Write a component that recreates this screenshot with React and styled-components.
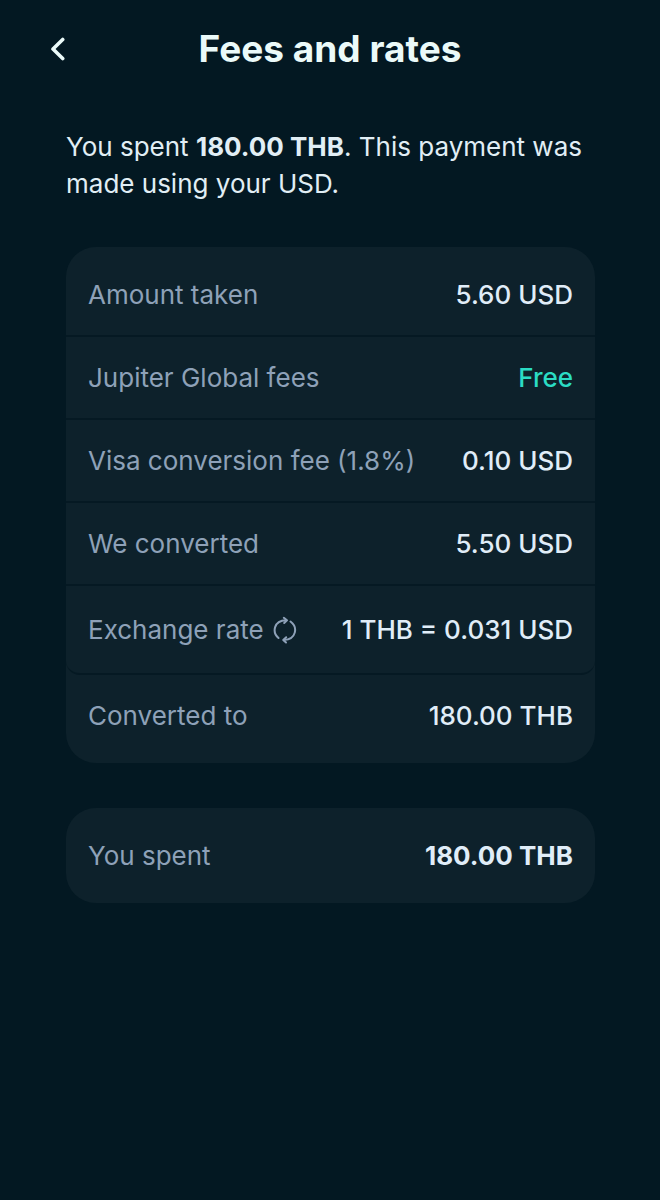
import React from "react";
import styled, { createGlobalStyle } from "styled-components";

const fees = [
  { label: "Amount taken", value: "5.60 USD" },
  { label: "Jupiter Global fees", value: "Free", free: true },
  { label: "Visa conversion fee (1.8%)", value: "0.10 USD" },
  { label: "We converted", value: "5.50 USD" },
  { label: "Exchange rate", value: "1 THB = 0.031 USD", rate: true },
  { label: "Converted to", value: "180.00 THB" },
];

const RefreshIcon = () => (
  <svg
    width="24"
    height="28"
    viewBox="0 0 24 28"
    fill="none"
    stroke="currentColor"
    strokeWidth="2"
    strokeLinecap="round"
    strokeLinejoin="round"
    aria-hidden="true"
  >
    <path d="M5.5 22C-1 16.500 0.500 4.500 13 4.200" />
    <path d="M10.800 1.800L14 4.300L11.200 7" />
    <path d="M17.500 5.500C25 11 23.500 23.500 11 24" />
    <path d="M13.200 21.200L10.200 23.900L13 26.500" />
  </svg>
);

const App = () => {
  return (
    <Page>
      <GlobalStyle />
      <Header>
        <BackButton type="button" aria-label="Back">
          <svg width="16" height="24" viewBox="0 0 16 24" fill="none" aria-hidden="true">
            <path
              d="M12.700 2.500L3 12L12.700 21.500"
              stroke="currentColor"
              strokeWidth="3.600"
              strokeLinecap="round"
              strokeLinejoin="round"
            />
          </svg>
        </BackButton>
        <Title>Fees and rates</Title>
      </Header>
      <Main>
        <Summary>
          You spent <strong>180.00 THB</strong>. This payment was made using your USD.
        </Summary>
        <Card>
          {fees.map(({ label, value, free, rate }) => (
            <Row key={label} $rate={rate}>
              <Label>
                {label}
                {rate && <RefreshIcon />}
              </Label>
              <Value $free={free}>{value}</Value>
            </Row>
          ))}
        </Card>
        <Card>
          <Row>
            <Label>You spent</Label>
            <Value $total>180.00 THB</Value>
          </Row>
        </Card>
      </Main>
    </Page>
  );
};

const GlobalStyle = createGlobalStyle`
  body {
    margin: 0;
    background-color: #031822;
    font-family: Inter, "Liberation Sans", sans-serif;
    font-optical-sizing: none;
  }
`;

const Page = styled.div`
  min-height: 100vh;
  background-color: #031822;
`;

const Header = styled.header`
  display: grid;
  grid-template-columns: 48px 1fr 48px;
  align-items: center;
  padding: 25px 34px;
`;

const BackButton = styled.button`
  display: flex;
  align-items: center;
  justify-content: center;
  height: 48px;
  padding: 0;
  border: 0;
  background: none;
  color: #ebfaf9;
  cursor: pointer;
`;

const Title = styled.h1`
  margin: 0;
  color: #ebfaf9;
  font-size: 37px;
  font-weight: 700;
  line-height: 48px;
  text-align: center;
`;

const Main = styled.main`
  padding: 30px 65px 30px 66px;
`;

const Summary = styled.p`
  margin: 0 0 45px;
  color: #e1eef5;
  font-size: 26px;
  line-height: 37px;

  strong {
    font-weight: 700;
  }
`;

const Card = styled.dl`
  margin: 0 0 45px;
  padding: 7px 0;
  border-radius: 30px;
  background-color: #0d212b;
`;

const Row = styled.div`
  display: flex;
  align-items: center;
  justify-content: space-between;
  padding: ${({ $rate }) => ($rate ? "25px 22px" : "22px")};
  border-bottom: 2px solid #051923;
  border-radius: ${({ $rate }) => ($rate ? "0 0 14px 14px" : "0")};

  &:last-child {
    border-bottom: 0;
  }
`;

const Label = styled.dt`
  display: flex;
  align-items: center;
  gap: 9px;
  color: #8ea1b8;
  font-size: 26px;
  line-height: 37px;
`;

const Value = styled.dd`
  margin: 0;
  color: ${({ $free }) => ($free ? "#2bdcc4" : "#e0edf8")};
  font-size: 26px;
  font-weight: ${({ $total }) => ($total ? 700 : 500)};
  line-height: 37px;
`;

export default App;
